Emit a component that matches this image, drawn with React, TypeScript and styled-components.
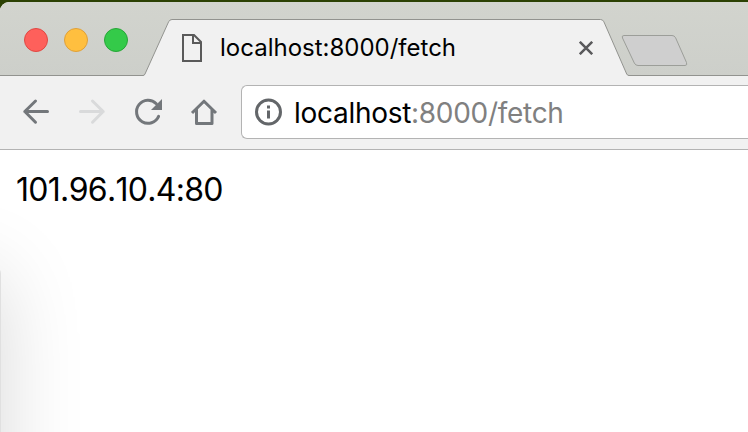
import React from "react";
import styled, { createGlobalStyle } from "styled-components";

const GlobalStyle = createGlobalStyle`
  * { box-sizing: border-box; }
  body { margin: 0; overflow: hidden; background: #fff; }
`;

const Desktop = styled.div`
  width: 748px;
  height: 432px;
  padding-top: 2px;
  overflow: hidden;
  background: #2b4103;
  font-family: Inter, "Liberation Sans", sans-serif;
`;

const Window = styled.div`
  position: relative;
  display: flex;
  flex-direction: column;
  height: 430px;
  overflow: hidden;
  border-top-left-radius: 9px;
  background: #fff;
`;

const TabStrip = styled.div`
  display: flex;
  flex: none;
  height: 74px;
  background: linear-gradient(#d2d4ce, #cdcfca);
  box-shadow: inset 0 -1px #92938f;
`;

const WindowControls = styled.div`
  display: flex;
  gap: 16px;
  width: 143px;
  padding: 26px 0 0 24px;
`;

const Light = styled.span<{ $fill: string; $edge: string }>`
  width: 24px;
  height: 24px;
  border: 1px solid ${(p) => p.$edge};
  border-radius: 50%;
  background: ${(p) => p.$fill};
`;

const Tab = styled.div`
  position: relative;
  display: flex;
  align-items: center;
  width: 486px;
  height: 57px;
  margin-top: 17px;
  padding-left: 38px;
`;

const TabShape = styled.svg`
  position: absolute;
  inset: 0;
`;

const PageIcon = styled.svg`
  position: relative;
  margin-right: 17px;
`;

const TabTitle = styled.span`
  position: relative;
  width: 359px;
  font-size: 24px;
  line-height: 30px;
  letter-spacing: 0;
  color: #000;
  white-space: nowrap;
`;

const CloseIcon = styled.svg`
  position: relative;
  flex: none;
`;

const NewTab = styled.svg`
  flex: none;
  margin: 32px 0 0 -9px;
`;

const Toolbar = styled.div`
  display: flex;
  flex: none;
  height: 74px;
  border-bottom: 1px solid #b3b3b3;
  background: #f1f1f1;
`;

const Navigation = styled.div`
  display: flex;
  gap: 24px;
  width: 241px;
  padding: 20px 0 0 20px;
`;

const Icon = styled.svg<{ $color?: string }>`
  flex: none;
  fill: none;
  stroke: ${(p) => p.$color ?? "#73777b"};
  stroke-width: 3;
`;

const AddressBar = styled.div`
  display: flex;
  align-items: center;
  flex: 1;
  height: 54px;
  margin-top: 9px;
  padding-left: 12px;
  border: 1px solid #b3b3b3;
  border-right: 0;
  border-radius: 6px 0 0 6px;
  background: #fff;
`;

const Address = styled.span`
  margin-left: 10px;
  padding-top: 2px;
  font-size: 28px;
  line-height: 36px;
  letter-spacing: -0.29px;
  color: #808080;
  white-space: nowrap;
`;

const Host = styled.span`
  color: #000;
`;

const Page = styled.main`
  flex: 1;
  padding: 19px 16px;
  font-size: 32px;
  line-height: 42px;
  letter-spacing: -0.7px;
  font-kerning: none;
  color: #000;
`;

/* Soft edge cast by the neighbouring window to the left */
const NeighbourShadow = styled.div`
  position: absolute;
  left: -400px;
  top: 264px;
  width: 401px;
  height: 700px;
  border-radius: 8px;
  background: #e0e0e0;
  box-shadow: 0 10px 84px rgba(0, 0, 0, 0.155);
`;

export default function App() {
  return (
    <Desktop>
      <GlobalStyle />
      <Window>
        <TabStrip>
          <WindowControls>
            <Light $fill="#fe605b" $edge="#e04843" />
            <Light $fill="#ffbf3f" $edge="#dfa03a" />
            <Light $fill="#34ca49" $edge="#27a638" />
          </WindowControls>
          <Tab>
            <TabShape width="486" height="57" viewBox="0 0 486 57">
              <path
                d="M0 56.5 Q1.4 56.5 2 55 L25.6 2.8 Q26.7 .5 29 .5 H457.5 Q459.8 .5 460.9 2.8 L483.7 55 Q484.5 56.5 486 56.5 V57 H0Z"
                fill="#f1f1f1"
              />
              <path
                d="M0 56.5 Q1.4 56.5 2 55 L25.6 2.8 Q26.7 .5 29 .5 H457.5 Q459.8 .5 460.9 2.8 L483.7 55 Q484.5 56.5 486 56.5"
                fill="none"
                stroke="#92938f"
              />
              <path d="M2 56.5 H484" stroke="#f1f1f1" />
            </TabShape>
            <PageIcon width="22" height="28" viewBox="0 0 22 28" fill="none" stroke="#5a5a5a" strokeWidth="2">
              <path d="M2 1 H13 L20 8 V27 H2Z M12 1 V9 H20" />
            </PageIcon>
            <TabTitle>localhost:8000/fetch</TabTitle>
            <CloseIcon width="14" height="14" viewBox="0 0 14 14" stroke="#5a5a5c" strokeWidth="2.5">
              <path d="M.8 .8 L13.2 13.2 M13.2 .8 L.8 13.2" />
            </CloseIcon>
          </Tab>
          <NewTab width="70" height="35" viewBox="0 0 70 35">
            <path
              d="M4 1.5 H52 Q54.5 1.5 55.6 3.8 L66.5 28.5 Q67.6 31.5 65 31.5 H18 Q15.5 31.5 14.3 29 L2.5 4 Q1.4 1.5 4 1.5Z"
              fill="#cfcfcf"
              stroke="#9c9e99"
            />
          </NewTab>
        </TabStrip>
        <Toolbar>
          <Navigation>
            <Icon width="32" height="32" strokeLinecap="round" strokeLinejoin="round">
              <path d="M15.5 5 L4.8 15.5 L15.5 26.2 M4.8 15.5 H27.5" />
            </Icon>
            <Icon width="32" height="32" $color="#d9dadb" strokeLinecap="round" strokeLinejoin="round">
              <path d="M16.5 5 L27.2 15.5 L16.5 26.2 M27.2 15.5 H4.5" />
            </Icon>
            <Icon width="32" height="32">
              <path d="M24.3 7.8 A11.5 11.5 0 1 0 26.6 20.4" strokeLinecap="round" />
              <path d="M30 3 V14 H19Z" fill="#73777b" stroke="none" />
            </Icon>
            <Icon width="32" height="32" strokeLinejoin="round">
              <path d="M4 17 L16 5.2 L28 17 M8.5 13 V27.5 H24 V13" />
            </Icon>
          </Navigation>
          <AddressBar>
            <Icon width="30" height="30" $color="#636669">
              <circle cx="14.5" cy="15" r="12" />
              <path d="M14.5 8.5 V11.5 M14.5 13.5 V21.5" />
            </Icon>
            <Address>
              <Host>localhost</Host>:8000/fetch
            </Address>
          </AddressBar>
        </Toolbar>
        <Page>101.96.10.4:80</Page>
        <NeighbourShadow />
      </Window>
    </Desktop>
  );
}
